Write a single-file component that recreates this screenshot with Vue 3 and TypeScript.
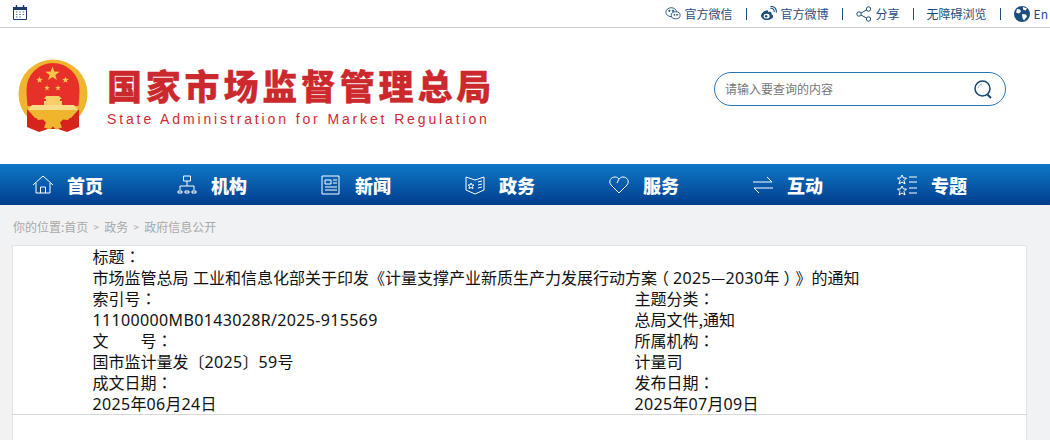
<template>
  <div class="page">
    <div class="topbar">
      <svg class="cal" viewBox="0 0 14 15" width="14" height="15">
        <path d="M.5 2.500h13v12H.5z" fill="#fff" stroke="#1d3b70" />
        <path d="M0 2h14v3H0z" fill="#1d3b70" />
        <path d="M3.500 0v3M10.500 0v3" stroke="#1d3b70" stroke-width="1.400" />
        <path d="M3 7h1.500M6.300 7h1.500M9.600 7h1.500M3 9.500h1.500M6.300 9.500h1.500M9.600 9.500h1.500M3 12h1.500M6.300 12h1.500" stroke="#5a6f96" />
      </svg>
      <div class="tools">
        <span class="tool">
          <svg viewBox="0 0 18 16" width="16" height="15" fill="none" stroke="#1d4f7d">
            <ellipse cx="7" cy="6.500" rx="6" ry="5" />
            <ellipse cx="12" cy="10" rx="5" ry="4" fill="#fff" />
            <circle cx="5" cy="5" r=".8" fill="#1d4f7d" />
            <circle cx="9" cy="5" r=".8" fill="#1d4f7d" />
            <circle cx="10.500" cy="9.500" r=".6" fill="#1d4f7d" />
            <circle cx="13.500" cy="9.500" r=".6" fill="#1d4f7d" />
          </svg>
          官方微信
        </span>
        <i />
        <span class="tool">
          <svg viewBox="0 0 18 16" width="17" height="15" fill="none">
            <path d="M7.500 4.500C4 5 1 8 1 10.500 1 13 4 15 7.500 15s6.500-2 6.500-4c0-1.500-1-2-2-2.300.5-1.500 0-2.700-1.500-2.700-1 0-2 .5-2 .5s.5-2-1-2z" fill="#1d4f7d" />
            <ellipse cx="7" cy="10.800" rx="3.200" ry="2.600" fill="#fff" />
            <circle cx="6.500" cy="11" r="1.300" fill="#1d4f7d" />
            <path d="M11 2.500c2.500-.5 4.500 1.500 4 4M11 .6c4-.6 7 2.500 6.300 6.400" stroke="#1d4f7d" stroke-width="1.200" />
          </svg>
          官方微博
        </span>
        <i />
        <span class="tool">
          <svg viewBox="0 0 16 16" width="16" height="16" fill="none" stroke="#1d4f7d">
            <circle cx="3" cy="8" r="2.200" />
            <circle cx="12.500" cy="3" r="2.200" />
            <circle cx="12.500" cy="13" r="2.200" />
            <path d="M5 7l5.500-3M5 9l5.500 3" />
          </svg>
          分享
        </span>
        <i />
        <span class="tool">无障碍浏览</span>
        <i />
        <span class="tool en">
          <svg viewBox="0 0 16 16" width="16" height="16">
            <circle cx="8" cy="8" r="8" fill="#1d4f7d" />
            <path d="M3 3l3 .5 1 2-2 2-3-1zM9 1l4 1.500-1.500 2-2.500-1zM8 8l4 .5 1 2-3 4-1.500-2.500z" fill="#fff" />
          </svg>
          En
        </span>
      </div>
    </div>

    <header class="masthead">
      <div class="brand">
        <svg class="emblem" viewBox="0 0 70 74" width="70" height="74">
          <circle cx="35" cy="35" r="34.500" fill="#f0b52e" />
          <path d="M9 50L9 68l12 5 9-3h10l9 3 12-5V50l-8 9H17z" fill="#d8231c" />
          <path d="M9.500 47C9 40 8.500 36 8.500 30.500a26.500 26.500 0 0 1 53 0c0 5.500-.5 9.500-1 16.500z" fill="#e8302a" />
          <polygon v-for="s in stars" :key="s.x" :points="starPoints(s.x, s.y, s.r)" fill="#f4c64a" />
          <path d="M28 37h13l3 3h-2v2h2v4H26v-4h2v-2h-2z" fill="#f7d06a" />
          <path d="M14 46h42l4 5H10z" fill="#f9dc88" />
          <path d="M16 56c7-2 12 1 19 1s12-3 19-1l-4 5-5-.500-3 3 2 5-6 2-3-3-3 3-6-2 2-5-3-3-5 .500z" fill="#f0b52e" />
        </svg>
        <div class="titles">
          <div class="cn">国家市场监督管理总局</div>
          <div class="en-name">State Administration for Market Regulation</div>
        </div>
      </div>
      <div class="search">
        <span>请输入要查询的内容</span>
        <svg viewBox="0 0 20 20" width="20" height="20" fill="none" stroke="#14486f" stroke-width="1.500">
          <circle cx="9.500" cy="9.500" r="7.500" />
          <path d="M14.500 15.500l3.500 3.500" stroke-width="2" />
          <path d="M5 9c.5-2 2-3.500 4-4" stroke="#8fb3cc" stroke-width="1" />
        </svg>
      </div>
    </header>

    <nav class="nav">
      <a v-for="item in nav" :key="item.label" class="nav-item">
        <svg viewBox="0 0 22 22" width="22" height="22" fill="none" stroke="#fff" stroke-width="1">
          <path v-for="(d, i) in item.paths" :key="i" :d="d" />
        </svg>
        <b>{{ item.label }}</b>
      </a>
    </nav>

    <main class="content">
      <div class="crumbs">
        <span>你的位置:首页</span><em>&gt;</em><span>政务</span><em>&gt;</em><span>政府信息公开</span>
      </div>
      <section class="card">
        <div class="meta">
          <div v-for="(cell, i) in cells" :key="i" class="cell" :class="{ full: i < 2 }">
            <span v-for="(part, j) in split(cell)" :key="j" :class="part.cls">{{ part.text }}</span>
          </div>
        </div>
      </section>
    </main>
  </div>
</template>

<script setup lang="ts">
interface NavItem {
  label: string
  paths: string[]
}

const nav: NavItem[] = [
  { label: '首页', paths: ['M1 11L11 2l10 9', 'M4 9v10h14V9', 'M8.500 19v-6h5v6'] },
  { label: '机构', paths: ['M7.500 2h7v5h-7z', 'M11 7v5', 'M4 16v-4h14v4', 'M2 17h4v2H2zM9 17h4v2H9zM16 17h4v2h-4z'] },
  { label: '新闻', paths: ['M2 2h17v18H2z', 'M5 6h6v4H5z', 'M13 6h4M13 9h4M5 13h12M5 16h12'] },
  { label: '政务', paths: ['M2 3l9 3 9-3v13l-9 4-9-4z', 'M14 8l4-1M14 11l4-1M14 14l4-1', 'M7 9l1 2h2l-1.500 1.500.5 2-2-1-2 1 .5-2L4 11h2z'] },
  { label: '服务', paths: ['M11 19L3 11C0 7 3 3 7 3c2 0 3 1 4 2 1-1 2-2 4-2 4 0 7 4 4 8z', 'M11 5l-2 4'] },
  { label: '互动', paths: ['M1 8h19l-5-5', 'M21 14H2l5 5'] },
  { label: '专题', paths: ['M6 1l1.500 3h3L8 6.500 9 10 6 8l-3 2 1-3.500L1.500 4h3z', 'M6 12l1.500 3h3L8 17.500 9 21l-3-2-3 2 1-3.500L1.500 15h3z', 'M13 3h8M13 8h8M13 14h8M13 19h8'] },
]

const stars = [
  { x: 34.500, y: 15, r: 7.500 },
  { x: 21.500, y: 21, r: 3.500 },
  { x: 47.500, y: 21, r: 3.500 },
  { x: 29, y: 29, r: 3 },
  { x: 40, y: 29, r: 3 },
]

function starPoints(x: number, y: number, r: number) {
  const pts: string[] = []
  for (let i = 0; i < 10; i++) {
    const a = -Math.PI / 2 + (i * Math.PI) / 5
    const d = i % 2 ? r * 0.4 : r
    pts.push(`${(x + d * Math.cos(a)).toFixed(2)},${(y + d * Math.sin(a)).toFixed(2)}`)
  }
  return pts.join(' ')
}

const cells = [
  '标题：',
  '市场监管总局 工业和信息化部关于印发《计量支撑产业新质生产力发展行动方案（2025—2030年）》的通知',
  '索引号：',
  '主题分类：',
  '11100000MB0143028R/2025-915569',
  '总局文件,通知',
  '文\u2003\u2003号：',
  '所属机构：',
  '国市监计量发〔2025〕59号',
  '计量司',
  '成文日期：',
  '发布日期：',
  '2025年06月24日',
  '2025年07月09日',
]

const partClass: Record<string, string> = {
  '：': 'punct',
  '（': 'paren lp',
  '）': 'paren rp',
  '》': 'paren',
}

// 数字和全角标点的字形和参考图不同，分段单独设字体
function split(text: string) {
  return text
    .split(/([0-9A-Za-z/\- ]+|[：（）》])/)
    .filter(Boolean)
    .map((t) => ({
      text: t,
      cls: partClass[t] ?? (/^[0-9A-Za-z/\- ]+$/.test(t) ? 'num' : ''),
    }))
}
</script>

<style>
html,
body {
  margin: 0;
  background: #f1f2f3;
}
</style>

<style scoped>
.page {
  width: 1050px;
  height: 440px;
  overflow: hidden;
  font-family: "Noto Sans CJK SC", "Liberation Sans", sans-serif;
}

.topbar {
  height: 27px;
  display: flex;
  align-items: center;
  justify-content: space-between;
  padding: 0 2px 0 13px;
  background: #fff;
  border-bottom: 1px solid #ccc;
}

.cal {
  margin-top: -3px;
}

.tools {
  display: flex;
  align-items: center;
  font-size: 12px;
  color: #1d4f7d;
}

.tools i {
  width: 1px;
  height: 12px;
  margin: 0 13px;
  background: #1d4f7d;
}

.tool {
  display: flex;
  align-items: center;
  gap: 4px;
}

.masthead {
  height: 136px;
  display: flex;
  align-items: center;
  justify-content: space-between;
  padding: 0 44px 0 18px;
  background: #fff;
}

.brand {
  display: flex;
  align-items: center;
  gap: 19px;
  margin-top: -1px;
}

.cn {
  font-size: 35px;
  font-weight: 900;
  line-height: 42px;
  letter-spacing: 3.800px;
  color: #cc292d;
  -webkit-text-stroke: 0.3px #cc292d;
  white-space: nowrap;
}

.en-name {
  margin-top: 5px;
  font-family: "Liberation Sans", sans-serif;
  font-size: 14px;
  line-height: 17px;
  letter-spacing: 2.870px;
  color: #cf2c30;
  white-space: nowrap;
}

.search {
  box-sizing: border-box;
  width: 292px;
  height: 34px;
  display: flex;
  align-items: center;
  justify-content: space-between;
  padding: 0 12px 0 10px;
  background: #fff;
  border: 1px solid #2a75b3;
  border-radius: 17px;
  font-size: 12px;
  color: #777;
  margin-top: -15px;
}

.nav {
  height: 41px;
  display: grid;
  grid-template-columns: repeat(7, 144px);
  padding-left: 32px;
  background: linear-gradient(#0f78c8, #013d8c);
}

.nav-item {
  display: flex;
  align-items: center;
  gap: 13px;
  color: #fff;
}

.nav-item b {
  font-size: 18px;
  font-weight: 900;
}

.content {
  padding: 0 23px 0 12px;
}

.crumbs {
  height: 40px;
  display: flex;
  align-items: center;
  gap: 4px;
  padding: 2px 0 0 1px;
  box-sizing: border-box;
  font-size: 12px;
  color: #a9a9a9;
}

.crumbs em {
  font-style: normal;
  font-size: 10px;
  width: 8px;
  text-align: center;
}

.card {
  height: 300px;
  background: #fff;
  border: 1px solid #e3e3e3;
}

.meta {
  box-sizing: border-box;
  display: grid;
  grid-template-columns: 542px 1fr;
  grid-auto-rows: 21px;
  padding-left: 80.500px;
  height: 169px;
  font-size: 16px;
  line-height: 21px;
  color: #111;
  border-bottom: 1px solid #d8d8d8;
  margin: 0 -1px;
  text-spacing-trim: space-all;
}

.full {
  grid-column: 1 / -1;
}

.num {
  font-family: "Noto Sans", sans-serif;
  letter-spacing: 0.35px;
}

.punct {
  font-family: "Noto Sans CJK TC", sans-serif;
}

/* 括号在参考图里居中于全角格 */
.paren {
  display: inline-block;
  width: 16px;
  white-space: nowrap;
}

.lp {
  text-indent: -4px;
}

.rp {
  text-indent: 4px;
}
</style>
